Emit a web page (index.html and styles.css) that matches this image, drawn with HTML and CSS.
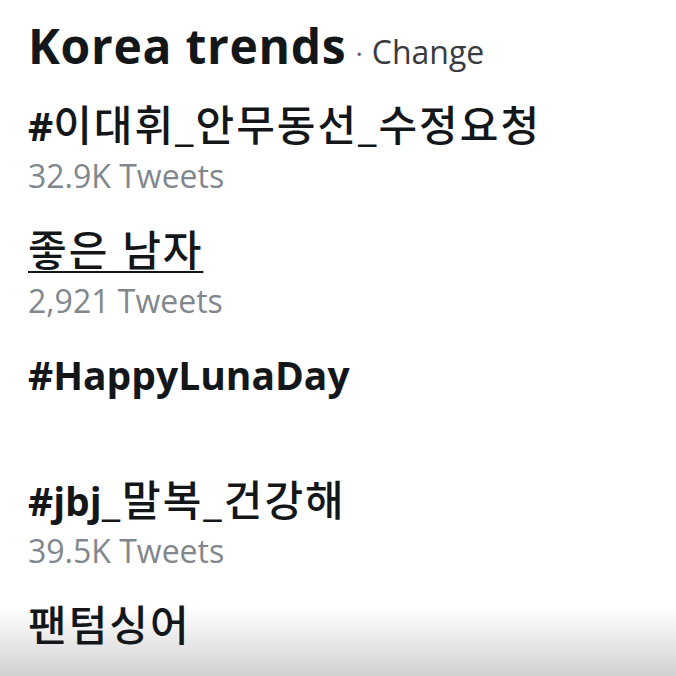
FILE: index.html
```html
<!DOCTYPE html>
<html lang="ko">
<head>
<meta charset="utf-8">
<title>Korea trends</title>
<link rel="stylesheet" href="styles.css">
</head>
<body>
<section class="trends">
  <header class="trends-head">
    <h2 class="trends-title">Korea trends</h2>
    <span class="trends-sep">·</span>
    <a class="trends-change">Change</a>
  </header>
  <ul class="trend-list">
    <li class="trend">
      <div class="trend-name">#<span class="ko">이대휘_안무동선_수정요청</span></div>
      <div class="trend-count">32.9K Tweets</div>
    </li>
    <li class="trend">
      <div class="trend-name"><span class="ko trend-link--hover">좋은 남자</span></div>
      <div class="trend-count">2,921 Tweets</div>
    </li>
    <li class="trend">
      <div class="trend-name">#HappyLunaDay</div>
      <div class="trend-count"></div>
    </li>
    <li class="trend">
      <div class="trend-name">#jbj<span class="ko">_말복_건강해</span></div>
      <div class="trend-count">39.5K Tweets</div>
    </li>
    <li class="trend">
      <div class="trend-name"><span class="ko">팬텀싱어</span></div>
    </li>
  </ul>
</section>
</body>
</html>
```

FILE: styles.css
```css
html, body {
  margin: 0;
  padding: 0;
}
body {
  width: 676px;
  height: 676px;
  overflow: hidden;
  background: linear-gradient(to bottom, #ffffff 0px, #ffffff 608px, #d1d1d1 676px);
  font-family: "Open Sans", "Noto Sans CJK KR", sans-serif;
  color: #14171a;
}
.trends {
  padding: 18px 0 0 28px;
}
.trends-head {
  display: flex;
  align-items: baseline;
  gap: 9px;
  height: 82px;
}
.trends-title {
  margin: 0;
  font-size: 48px;
  font-weight: 700;
  line-height: 56px;
  letter-spacing: 0.7px;
}
.trends-sep {
  font-size: 28px;
  color: #5b6066;
}
.trends-change {
  font-size: 32px;
  color: #383b40;
  line-height: 40px;
}
.trend-list {
  list-style: none;
  margin: 0;
  padding: 0;
}
.trend {
  height: 125px;
}
.trend:last-child {
  height: auto;
}
.trend-name {
  font-size: 39px;
  font-weight: 700;
  line-height: 50px;
  height: 50px;
  white-space: nowrap;
}
.trend-name .ko {
  font-weight: 500;
  font-size: 42px;
  letter-spacing: 2px;
}
.trend-link--hover {
  text-decoration: underline;
  text-decoration-thickness: 2px;
  text-underline-offset: 5px;
}
.trend-count {
  font-size: 32px;
  line-height: 52px;
  color: #80878d;
  height: 52px;
}
```
